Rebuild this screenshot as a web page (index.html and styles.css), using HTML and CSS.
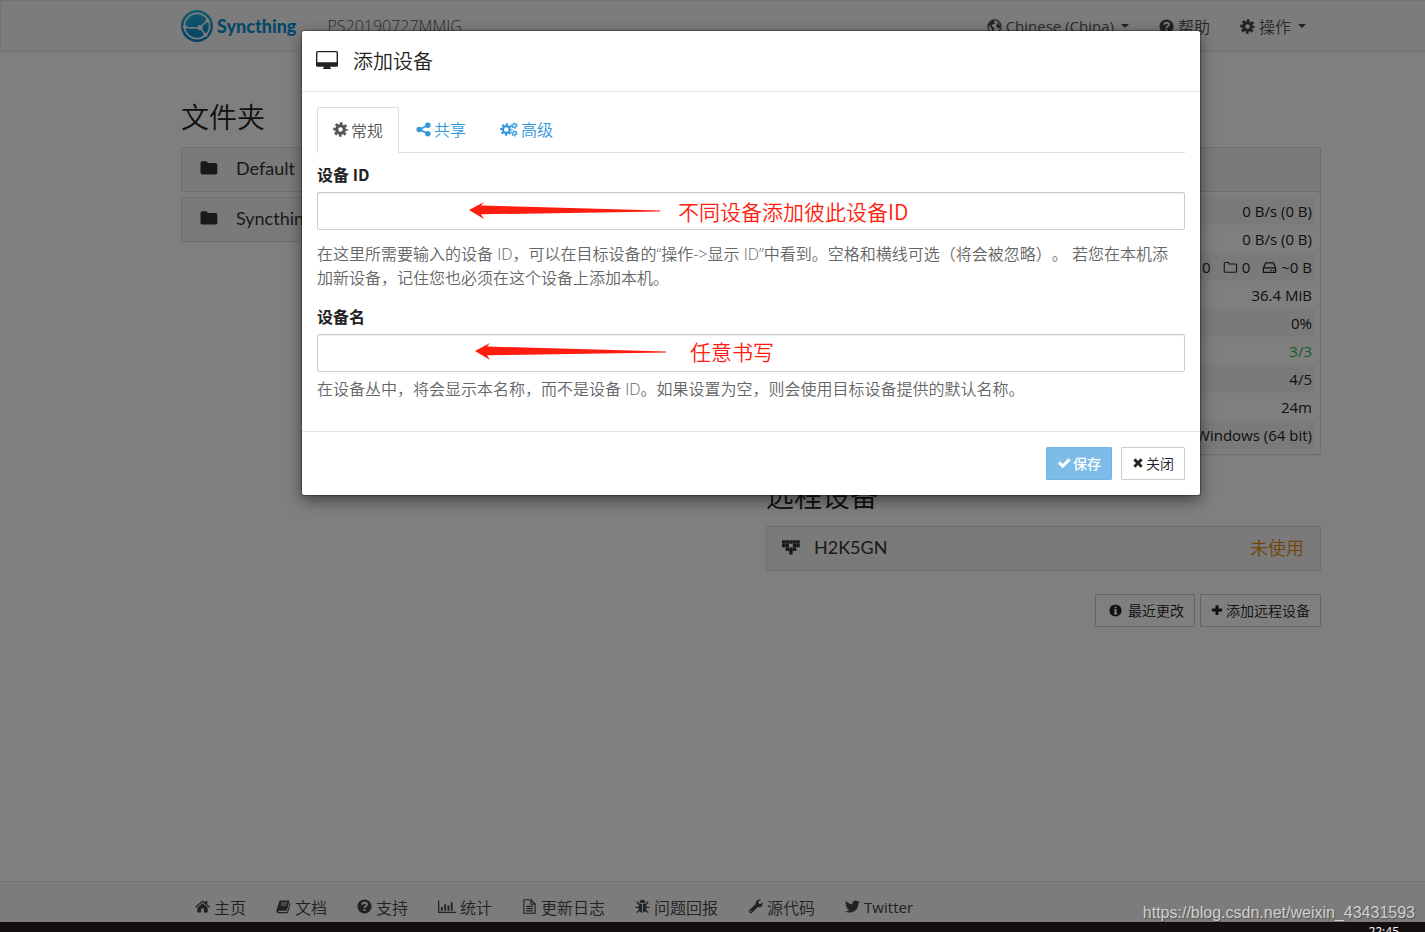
FILE: index.html
```html
<!DOCTYPE html>
<html lang="zh-CN">
<head>
<meta charset="utf-8">
<title>Syncthing</title>
<link rel="stylesheet" href="styles.css">
</head>
<body>
<svg class="sprite" aria-hidden="true">
  <symbol id="cog" viewBox="0 0 16 16"><circle cx="8" cy="8" r="4.1" fill="none" stroke="currentColor" stroke-width="3.4"/><circle cx="8" cy="8" r="6.6" fill="none" stroke="currentColor" stroke-width="2.4" stroke-dasharray="2.9 2.284" stroke-dashoffset="1.45"/></symbol>
  <symbol id="cogs" viewBox="0 0 20 16"><g fill="none" stroke="currentColor"><circle cx="7" cy="8" r="3.8" stroke-width="2.4"/><circle cx="7" cy="8" r="5.8" stroke-width="2.2" stroke-dasharray="2.5 2.055" stroke-dashoffset="1.25"/><circle cx="16" cy="3.7" r="1.9" stroke-width="1.4"/><circle cx="16" cy="3.7" r="3" stroke-width="1.2" stroke-dasharray="1.5 1.64"/><circle cx="16" cy="12.3" r="1.9" stroke-width="1.4"/><circle cx="16" cy="12.3" r="3" stroke-width="1.2" stroke-dasharray="1.5 1.64"/></g></symbol>
  <symbol id="share" viewBox="0 0 16 16"><path d="M12.5 3.5L4 8l8.500 4.500" fill="none" stroke="currentColor" stroke-width="2"/><circle cx="12.600" cy="3.400" r="2.900"/><circle cx="3.400" cy="8" r="2.900"/><circle cx="12.600" cy="12.600" r="2.900"/></symbol>
  <symbol id="globe" viewBox="0 0 16 16"><circle cx="8" cy="8" r="7" fill="none" stroke="currentColor" stroke-width="1.300"/><path d="M3 4L5.500 2 8.500 2 7.500 3.500 9 4.500 7 5.500 6 5.500 4.500 7.500l2 1 1.500 1.500L7 12.500 6.500 14 5.500 11.500 4.500 9.500 2.500 7.500 2 6zM11 3l2 2 1 3-1 3-1.200-1.800-1.600-.4-.6-2 1.600-1.500z"/></symbol>
  <symbol id="help" viewBox="0 0 16 16"><circle cx="8" cy="8" r="7.500"/><path d="M5.500 6.200C5.600 4.600 6.600 4 8 4c1.500 0 2.600.8 2.600 2.100C10.600 7.600 8 7.800 8 9.600" fill="none" stroke="#f8f8f8" stroke-width="1.900"/><path d="M7 10.800h2v2H7z" fill="#f8f8f8"/></symbol>
  <symbol id="info" viewBox="0 0 16 16"><circle cx="8" cy="8" r="7.500"/><path d="M7 3h2.300v2.200H7zM6 6.500h3.400v5h1v1.500H5.900v-1.500h1V8H6z" fill="#fff"/></symbol>
  <symbol id="plus" viewBox="0 0 16 16"><path d="M6 1.500h4V6h4.800v4H10v4.800H6V10H1.200V6H6z"/></symbol>
  <symbol id="folder" viewBox="0 0 18 16"><path d="M.5 3Q.5 1.300 2.200 1.300H6Q7.600 1.300 7.700 3H15.500Q17.300 3 17.300 4.800V12.800Q17.300 14.500 15.500 14.500H2.200Q.5 14.500.5 12.800z"/></symbol>
  <symbol id="folder-open" viewBox="0 0 18 16"><path d="M1.500 3.300q0-1.300 1.300-1.300H6q1.200 0 1.200 1.800h7.800q1.300 0 1.300 1.300v7.300q0 1.300-1.300 1.300H2.800q-1.300 0-1.300-1.300z" fill="none" stroke="currentColor" stroke-width="1.300"/></symbol>
  <symbol id="drive" viewBox="0 0 16 16"><path d="M1.500 8.500L4 3h8l2.500 5.500v4.700h-13zM1.500 8.500h13" fill="none" stroke="currentColor" stroke-width="1.300" stroke-linejoin="round"/><path d="M9 10.300h1.500v1.400H9zM11.700 10.300h1.500v1.400h-1.500z"/></symbol>
  <symbol id="desktop" viewBox="0 0 22 19"><path fill-rule="evenodd" d="M1.500 0h19Q22 0 22 1.500v12.800q0 1.500-1.500 1.500H14v1h1V18H7v-1.200h1v-1H1.500Q0 15.800 0 14.300V1.500Q0 0 1.500 0zM1.400 1.300v9.900h19.200V1.300z"/></symbol>
  <symbol id="check" viewBox="0 0 16 16"><path d="M1 8.500l2.500-2.500 3 3L13 2.500 15.500 5l-9 9z"/></symbol>
  <symbol id="times" viewBox="0 0 16 16"><path d="M4.500 1.800L8 5.300l3.500-3.500 2.700 2.700L10.700 8l3.500 3.500-2.700 2.700L8 10.700l-3.500 3.500-2.700-2.700L5.300 8 1.800 4.500z"/></symbol>
  <symbol id="home" viewBox="0 0 16 16"><path d="M0 8.200L8 1.500l2.800 2.300V2.200h2.300v3.600L16 8.200l-.9 1L8 3.300.9 9.200zM2.500 9L8 4.500 13.500 9v5.500h-4V10.200h-3v4.300h-4z"/></symbol>
  <symbol id="book" viewBox="0 0 16 16"><path d="M4.800 1.500H13.500q1 0 .8 1L11.800 11.500q-.3.900-1.300.9H3q-1 0-.7.900.1.500.8.500h8.200q.6 0 .8-.7L14.700 4q1 .4.700 1.400L12.900 14q-.4 1.200-1.600 1.200H2.700Q.6 15.200.4 13q0-.8.300-1.700L3.300 2.800Q3.700 1.500 4.800 1.500z"/><path d="M5.800 4.300h6M5.200 6.500h6" stroke="#f8f8f8"/></symbol>
  <symbol id="chart" viewBox="0 0 19 16"><path d="M0 1.500h1.300v12H19v1.300H0zM3 8.500h2v4H3zM6.500 5.500h2v7h-2zM10 7h2v5.500h-2zM13.500 3.500h2v9h-2z"/></symbol>
  <symbol id="file" viewBox="0 0 16 16"><path d="M2 .8h7.500L14 5.300v9.900H2zM9.500 1v4.500h4.300M4.500 7.800h7M4.500 10.200h7M4.500 12.600h7" fill="none" stroke="currentColor" stroke-width="1.200"/></symbol>
  <symbol id="bug" viewBox="0 0 16 16"><path d="M4.800 4Q4.800.8 8 .8T11.200 4zM4 5h3.500v9.500Q4 14 4 10zM8.500 5H12v5q0 4-3.500 4.500z"/><path d="M1.800 3l2.800 2.800M14.200 3l-2.800 2.800M.5 9h4M11.500 9h4M2 14.500L4.800 11.500M14 14.500l-2.800-3" stroke="currentColor" stroke-width="1.400"/></symbol>
  <symbol id="wrench" viewBox="0 0 16 16"><path fill-rule="evenodd" d="M8.200 5.300Q7.800 2.500 10 1.200 11.900 0 14 .9L11.200 2.700V4.600l1.700 1L15.600 4Q16.200 7.400 13.400 8.500 11.900 9 10.600 8.400L4 14.900q-1 .8-2 0l-.9-.9q-.8-1 0-2zM2.800 12.200a.8.800 0 1 0 .1 0z"/></symbol>
  <symbol id="twitter" viewBox="0 0 512 512"><path d="M459.370 151.716c.325 4.548.325 9.097.325 13.645 0 138.720-105.583 298.558-298.558 298.558-59.452 0-114.680-17.219-161.137-47.106 8.447.974 16.568 1.299 25.340 1.299 49.055 0 94.213-16.568 130.274-44.832-46.132-.975-84.792-31.188-98.112-72.772 6.498.974 12.995 1.624 19.818 1.624 9.421 0 18.843-1.300 27.614-3.573-48.081-9.747-84.143-51.980-84.143-102.985v-1.299c13.969 7.797 30.214 12.670 47.431 13.319-28.264-18.843-46.781-51.005-46.781-87.391 0-19.492 5.197-37.360 14.294-52.954 51.655 63.675 129.300 105.258 216.365 109.807-1.624-7.797-2.599-15.918-2.599-24.040 0-57.828 46.782-104.934 104.934-104.934 30.213 0 57.502 12.670 76.670 33.137 23.715-4.548 46.456-13.320 66.599-25.340-7.798 24.366-24.366 44.833-46.132 57.827 21.117-2.273 41.584-8.122 60.426-16.243-14.292 20.791-32.161 39.308-52.628 54.253z"/></symbol>
  <symbol id="identicon" viewBox="0 0 25 20"><path d="M0 0h4.700v4.700H0zM5 0h4.700v4.700H5zM10 0h4.700v4.700H10zM15 0h4.700v4.700H15zM20 0h4.700v4.700H20zM0 5h4.700v4.700H0zM5 5h4.700v4.700H5zM15 5h4.700v4.700H15zM20 5h4.700v4.700H20zM5 10h4.700v4.700H5zM10 10h4.700v4.700H10zM15 10h4.700v4.700H15zM10 15h4.700v4.700H10z"/></symbol>
  <symbol id="arrow" viewBox="0 0 191 17"><path d="M0 8L15 0l-3 3.500L191 8.500v1L12 12.300 15 17z"/></symbol>
</svg>

<div class="app">
  <nav class="navbar">
    <a class="brand" href="#">
      <svg class="logo" viewBox="0 0 32 32" aria-hidden="true"><defs><linearGradient id="lg" x1="0" y1="0" x2="0" y2="1"><stop offset="0" stop-color="#26b6db"/><stop offset="1" stop-color="#0882c8"/></linearGradient></defs><circle cx="16" cy="16" r="16" fill="url(#lg)"/><g fill="none" stroke="#f8f8f8" stroke-width="1.600"><circle cx="16" cy="16" r="12.600"/><path d="M19 17.500L26.500 10.500M19 17.500L24.500 25M19 17.500Q11 18.500 3.500 17"/></g><g fill="#f8f8f8"><circle cx="19" cy="17.500" r="2.600"/><circle cx="26.500" cy="10.500" r="2"/><circle cx="24.500" cy="25" r="2"/><circle cx="4" cy="17" r="2"/></g></svg>
      <span>Syncthing</span>
    </a>
    <span class="device-name">PS20190727MMJG</span>
    <div class="menu">
      <a href="#"><svg class="icon"><use href="#globe"/></svg><span class="latin">Chinese (China)</span><i class="caret"></i></a>
      <a href="#"><svg class="icon"><use href="#help"/></svg>帮助</a>
      <a href="#"><svg class="icon"><use href="#cog"/></svg>操作<i class="caret"></i></a>
    </div>
  </nav>

  <main class="columns">
    <section>
      <h3>文件夹</h3>
      <button class="panel bar"><svg class="icon-lg"><use href="#folder"/></svg>Default</button>
      <button class="panel bar"><svg class="icon-lg"><use href="#folder"/></svg>Syncthing</button>
    </section>
    <section>
      <div class="panel device">
        <div class="device-head"></div>
        <table>
          <tr><td>0 B/s (0 B)</td></tr>
          <tr><td>0 B/s (0 B)</td></tr>
          <tr><td><span class="counts"><span>0</span><span><svg class="icon"><use href="#folder-open"/></svg>0</span><span><svg class="icon"><use href="#drive"/></svg>~0 B</span></span></td></tr>
          <tr><td>36.4 MiB</td></tr>
          <tr><td>0%</td></tr>
          <tr><td class="ok">3/3</td></tr>
          <tr><td>4/5</td></tr>
          <tr><td>24m</td></tr>
          <tr><td>Windows (64 bit)</td></tr>
        </table>
      </div>
      <h3>远程设备</h3>
      <button class="panel bar remote"><svg class="identicon"><use href="#identicon"/></svg>H2K5GN<span class="unused">未使用</span></button>
      <div class="actions">
        <button class="btn wide"><svg class="icon"><use href="#info"/></svg>最近更改</button>
        <button class="btn add"><svg class="icon"><use href="#plus"/></svg>添加远程设备</button>
      </div>
    </section>
  </main>

  <footer class="footer">
    <a href="#"><svg class="icon"><use href="#home"/></svg>主页</a>
    <a href="#"><svg class="icon"><use href="#book"/></svg>文档</a>
    <a href="#"><svg class="icon"><use href="#help"/></svg>支持</a>
    <a href="#"><svg class="icon chart"><use href="#chart"/></svg>统计</a>
    <a href="#"><svg class="icon"><use href="#file"/></svg>更新日志</a>
    <a href="#"><svg class="icon"><use href="#bug"/></svg>问题回报</a>
    <a href="#"><svg class="icon"><use href="#wrench"/></svg>源代码</a>
    <a href="#"><svg class="icon"><use href="#twitter"/></svg><span class="latin">Twitter</span></a>
  </footer>

  <div class="backdrop">
    <div class="modal" role="dialog" aria-labelledby="modal-title">
      <header class="modal-head"><svg class="desktop"><use href="#desktop"/></svg><h4 id="modal-title">添加设备</h4></header>
      <form class="modal-body">
        <div class="tabs">
          <a class="active" href="#"><svg class="icon"><use href="#cog"/></svg>常规</a>
          <a href="#"><svg class="icon"><use href="#share"/></svg>共享</a>
          <a href="#"><svg class="icon chart"><use href="#cogs"/></svg>高级</a>
        </div>
        <label for="device-id">设备 ID</label>
        <div class="field">
          <input id="device-id" type="text">
          <div class="note"><svg class="arrow"><use href="#arrow"/></svg>不同设备添加彼此设备ID</div>
        </div>
        <p class="help first">在这里所需要输入的设备 ID，可以在目标设备的“操作-&gt;显示 ID”中看到。空格和横线可选（将会被忽略）。 若您在本机添加新设备，记住您也必须在这个设备上添加本机。</p>
        <label for="name">设备名</label>
        <div class="field">
          <input id="name" type="text">
          <div class="note second"><svg class="arrow"><use href="#arrow"/></svg>任意书写</div>
        </div>
        <p class="help">在设备丛中，将会显示本名称，而不是设备 ID。如果设置为空，则会使用目标设备提供的默认名称。</p>
      </form>
      <div class="modal-foot">
        <button class="btn primary"><svg class="icon"><use href="#check"/></svg>保存</button>
        <button class="btn"><svg class="icon"><use href="#times"/></svg>关闭</button>
      </div>
    </div>
  </div>
</div>
<div class="taskbar"><time>22:45</time></div>
<div class="watermark">https://blog.csdn.net/weixin_43431593</div>
</body>
</html>
```
FILE: styles.css
```css
* { box-sizing: border-box; }
body {
  margin: 0;
  height: 100vh;
  display: flex;
  flex-direction: column;
  overflow: hidden;
  position: relative;
  background: #fff;
  color: #222;
  font: 350 16px/24px "Noto Sans CJK SC", sans-serif;
  text-spacing-trim: space-all;
}
.sprite { position: absolute; width: 0; height: 0; }
svg { fill: currentColor; flex: none; }
h3, h4, p { margin: 0; font-weight: 350; }
a { color: inherit; text-decoration: none; }
button, input { font: inherit; color: inherit; margin: 0; }
.latin, table { font-family: "Open Sans", sans-serif; font-size: 15px; font-weight: 400; }
.icon { width: 15px; height: 15px; }
.icon.chart { width: 18px; }
.icon-lg { width: 18px; height: 16px; }
.identicon { width: 18px; height: 15px; }

.app { flex: 1; min-height: 0; display: flex; flex-direction: column; position: relative; overflow: hidden; }
.navbar, .columns, .footer { padding: 0 104px 0 181px; }
.navbar {
  height: 52px;
  display: flex;
  align-items: center;
  background: #f8f8f8;
  border: 1px solid #e7e7e7;
  border-right: 0;
  padding: 0 104px 0 180px;
  color: #555;
}
.brand { display: flex; align-items: center; gap: 4px; color: #0891d1; font: 900 18px/24px Lato, sans-serif; }
.logo { width: 32px; height: 32px; }
.device-name { margin-left: 31px; font: 300 16px/24px "Open Sans", sans-serif; }
.menu { margin-left: auto; margin-right: 15px; display: flex; gap: 30px; }
.menu a, .footer a { display: flex; align-items: center; gap: 4px; }
.tabs a { display: flex; align-items: center; gap: 3px; }
.menu .icon, .footer .icon { color: #444; }
.caret { border: 4px solid transparent; border-top-color: #444; border-bottom: 0; margin-left: 3px; }

.columns { flex: 1; display: grid; grid-template-columns: 1fr 1fr; column-gap: 30px; padding-top: 49px; align-content: start; }
h3 { font-size: 28px; line-height: 30px; margin-bottom: 16px; }
.panel { background: #fff; border: 1px solid #ddd; border-radius: 2px; box-shadow: 0 1px 1px rgba(0, 0, 0, .05); }
.bar {
  width: 100%;
  height: 45px;
  margin-bottom: 5px;
  padding: 0 18px 3px;
  display: flex;
  align-items: center;
  gap: 18px;
  background: #f5f5f5;
  font: 400 18px/24px Lato, sans-serif;
  color: #333;
}
.bar.remote { padding: 0 16px 3px 15px; gap: 14px; margin-bottom: 23px; }
.unused { margin-left: auto; color: #e08e0b; font: 350 18px/24px "Noto Sans CJK SC", sans-serif; }
.device { margin: 46px 0 25px; }
.device-head { height: 44px; background: #f5f5f5; border-bottom: 1px solid #ddd; }
table { width: 100%; border-spacing: 0; padding: 5px; }
td { height: 28px; padding: 0 3px; text-align: right; line-height: 20px; }
tr:nth-child(odd) { background: #f5f5f5; }
.ok { color: #29b74e; }
.counts { display: inline-flex; gap: 12px; }
.counts span { display: flex; align-items: center; gap: 4px; }
.actions { display: flex; justify-content: flex-end; gap: 5px; }
.btn {
  height: 33px;
  padding: 0 10px 1px;
  display: flex;
  align-items: center;
  gap: 2px;
  border: 1px solid #ccc;
  border-radius: 1px;
  background: #fff;
  color: #222;
  font-size: 14px;
}
.btn .icon { width: 12px; height: 12px; }
.btn.wide { gap: 6px; padding-left: 13px; }
.btn.wide .icon { width: 13px; height: 13px; }
.btn.add { gap: 3px; }

.footer {
  height: 41px;
  padding-top: 9px;
  padding-left: 195px;
  display: flex;
  gap: 30px;
  background: #f8f8f8;
  border-top: 1px solid #e7e7e7;
  color: #444;
}
.backdrop {
  position: absolute;
  inset: 0;
  padding: 31px 225px 0 302px;
  background: rgba(0, 0, 0, .5);
}
.modal { background: #fff; border-radius: 2px; box-shadow: 0 0 1px 1px rgba(0, 0, 0, .3), 0 5px 15px rgba(0, 0, 0, .5); }
.modal-head { height: 61px; padding: 0 14px 1px; display: flex; align-items: center; gap: 15px; border-bottom: 1px solid #e5e5e5; }
.desktop { width: 22px; height: 19px; }
h4 { font-size: 20px; line-height: 30px; }
.modal-body { padding: 15px 15px 30px; }
.tabs { display: flex; border-bottom: 1px solid #ddd; color: #3498db; margin-bottom: 9px; }
.tabs a { height: 45px; padding: 0 16px 1px; margin-right: 2px; }
.tabs .active { height: 46px; padding: 0 15px 1px; margin-right: 1px; margin-bottom: -1px; border: 1px solid #ddd; border-bottom-color: #fff; border-radius: 2px 2px 0 0; background: #fff; color: #555; }
label { display: block; font-weight: 700; margin-bottom: 6px; }
.field { position: relative; }
input { display: block; width: 100%; height: 38px; padding: 6px 12px; border: 1px solid #ccc; border-radius: 2px; box-shadow: inset 0 1px 1px rgba(0, 0, 0, .075); }
.note { position: absolute; inset: 0; padding: 0 0 1px 152px; display: flex; align-items: center; gap: 18px; color: #ff1d10; font-size: 21px; pointer-events: none; }
.note.second { padding: 0 0 4px 158px; gap: 24px; }
.arrow { width: 191px; height: 17px; }
.help { color: #666; padding-top: 5px; font-family: "Open Sans", "Noto Sans CJK SC", sans-serif; }
.help.first { padding: 12px 8px 14px 0; }
.modal-foot { border-top: 1px solid #e5e5e5; padding: 15px; display: flex; justify-content: flex-end; gap: 9px; }
.primary { background: #7dbce9; border-color: #72b4e3; color: #fff; font-weight: 500; }
.modal-foot .primary .icon { width: 14px; height: 14px; }
.taskbar { height: 10px; overflow: hidden; background: #14100f; display: flex; justify-content: flex-end; padding-right: 26px; }
time { color: #fff; font: 12px/20px "Open Sans", sans-serif; }
.watermark { position: absolute; right: 10px; bottom: 9px; color: #d0d0d0; font: 16px/20px "Liberation Sans", sans-serif; text-shadow: 1px 1px 1px rgba(0, 0, 0, .35); }
```
